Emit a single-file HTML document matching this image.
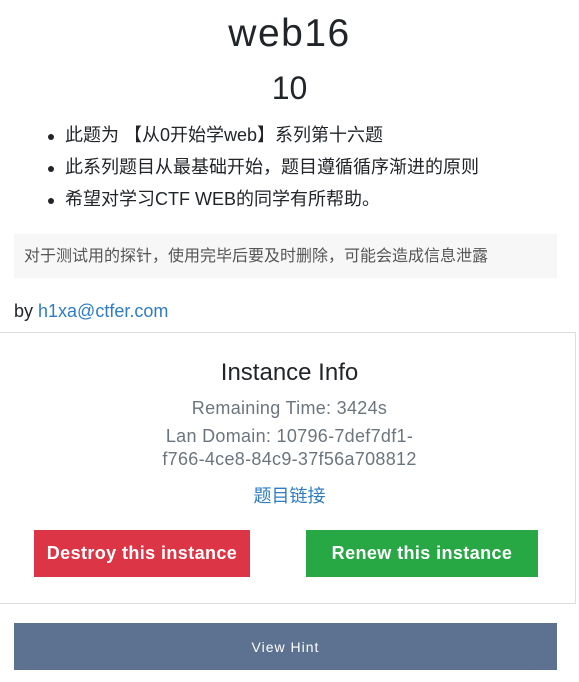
<!DOCTYPE html>
<html><head><meta charset="utf-8"><style>
*{margin:0;padding:0;box-sizing:border-box}
body{width:579px;height:682px;background:#fff;font-family:"Liberation Sans","Noto Sans CJK SC",sans-serif;color:#212529;position:relative;overflow:hidden}
.a{position:absolute;white-space:nowrap}
.c{left:0;width:579px;text-align:center}
ul li{position:absolute;left:65px;font-size:18px;line-height:24px;list-style:none;white-space:nowrap}
ul li:before{content:"";position:absolute;left:-17px;top:11px;width:6px;height:6px;border-radius:50%;background:#212529}
.btn{position:absolute;top:530px;height:47px;color:#fff;font-weight:bold;font-size:18px;line-height:47px;text-align:center;letter-spacing:0.4px}
</style></head><body>
<div class="a c" style="top:10px;font-size:39px;line-height:48px;letter-spacing:1.5px">web16</div>
<div class="a c" style="top:68px;font-size:32px;line-height:40px">10</div>
<ul>
<li style="top:123px">此题为 【从0开始学web】系列第十六题</li>
<li style="top:155px">此系列题目从最基础开始，题目遵循循序渐进的原则</li>
<li style="top:187px">希望对学习CTF WEB的同学有所帮助。</li>
</ul>
<div class="a" style="left:14px;top:234px;width:543px;height:44px;background:#f7f7f7"></div>
<div class="a" style="left:24px;top:246px;font-size:16px;line-height:22px;color:#555">对于测试用的探针，使用完毕后要及时删除，可能会造成信息泄露</div>
<div class="a" style="left:14px;top:299px;font-size:18px;line-height:24px">by <span style="color:#2f7cc0">h1xa@ctfer.com</span></div>
<div class="a" style="left:0;top:332px;width:576px;height:272px;border:1px solid #ddd;border-left:none"></div>
<div class="a c" style="top:358px;font-size:24px;line-height:30px">Instance Info</div>
<div class="a c" style="top:396px;font-size:18px;line-height:24px;color:#6c757d;letter-spacing:0.3px">Remaining Time: 3424s</div>
<div class="a c" style="top:424px;font-size:18px;line-height:24px;color:#6c757d;letter-spacing:0.3px">Lan Domain: 10796-7def7df1-</div>
<div class="a c" style="top:447px;font-size:18px;line-height:24px;color:#6c757d;letter-spacing:0.3px">f766-4ce8-84c9-37f56a708812</div>
<div class="a c" style="top:483px;font-size:18px;line-height:26px;color:#2f7cc0">题目链接</div>
<div class="btn" style="left:34px;width:216px;background:#dc3545">Destroy this instance</div>
<div class="btn" style="left:306px;width:232px;background:#28a745">Renew this instance</div>
<div class="a" style="left:14px;top:623px;width:543px;height:47px;background:#5c7290;color:#fff;font-size:14px;line-height:49px;text-align:center;letter-spacing:1px">View Hint</div>
</body></html>
